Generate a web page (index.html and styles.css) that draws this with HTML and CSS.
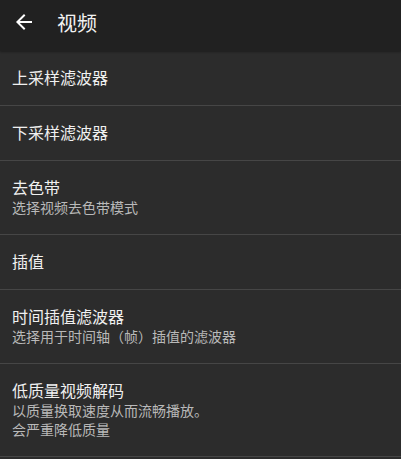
FILE: index.html
```html
<!DOCTYPE html>
<html lang="zh-CN">
<head>
<meta charset="utf-8">
<title>视频</title>
<link rel="stylesheet" href="styles.css">
</head>
<body>
<header class="appbar">
  <svg class="back" viewBox="0 0 24 24" width="24" height="24" aria-hidden="true"><path fill="#ffffff" d="M20 11H7.83l5.59-5.59L12 4l-8 8 8 8 1.41-1.41L7.83 13H20v-2z"/></svg>
  <h1 class="appbar-title">视频</h1>
</header>
<main class="list">
  <div class="item"><div class="item-title">上采样滤波器</div></div>
  <div class="item"><div class="item-title">下采样滤波器</div></div>
  <div class="item"><div class="item-title">去色带</div><div class="item-sub">选择视频去色带模式</div></div>
  <div class="item"><div class="item-title">插值</div></div>
  <div class="item"><div class="item-title">时间插值滤波器</div><div class="item-sub">选择用于时间轴（帧）插值的滤波器</div></div>
  <div class="item"><div class="item-title">低质量视频解码</div><div class="item-sub">以质量换取速度从而流畅播放。</div><div class="item-sub">会严重降低质量</div></div>
  <div class="item"><div class="item-title">&nbsp;</div></div>
</main>
</body>
</html>
```

FILE: styles.css
```css
html, body {
  margin: 0;
  padding: 0;
  background: #2c2c2c;
  font-family: "Noto Sans CJK SC", "Noto Sans", sans-serif;
  overflow: hidden;
}
.appbar {
  height: 51px;
  background: #212121;
  display: flex;
  align-items: center;
  padding: 0 0 0 12px;
  box-shadow: 0 1px 2px rgba(0,0,0,0.35);
  position: relative;
}
.back {
  display: block;
  flex: none;
  margin-top: -7px;
}
.appbar-title {
  margin: 0 0 0 21px;
  font-size: 20px;
  font-weight: 400;
  color: #f2f2f2;
  line-height: 24px;
  margin-top: -6px;
}
.list {
  display: flex;
  flex-direction: column;
}
.item {
  padding: 16px 12px 17px 12px;
  border-bottom: 1px solid #464646;
}
.item-title {
  font-size: 16px;
  line-height: 21px;
  color: #f0f0f0;
}
.item-sub {
  font-size: 14px;
  line-height: 19px;
  color: #b9b9b9;
}
```
